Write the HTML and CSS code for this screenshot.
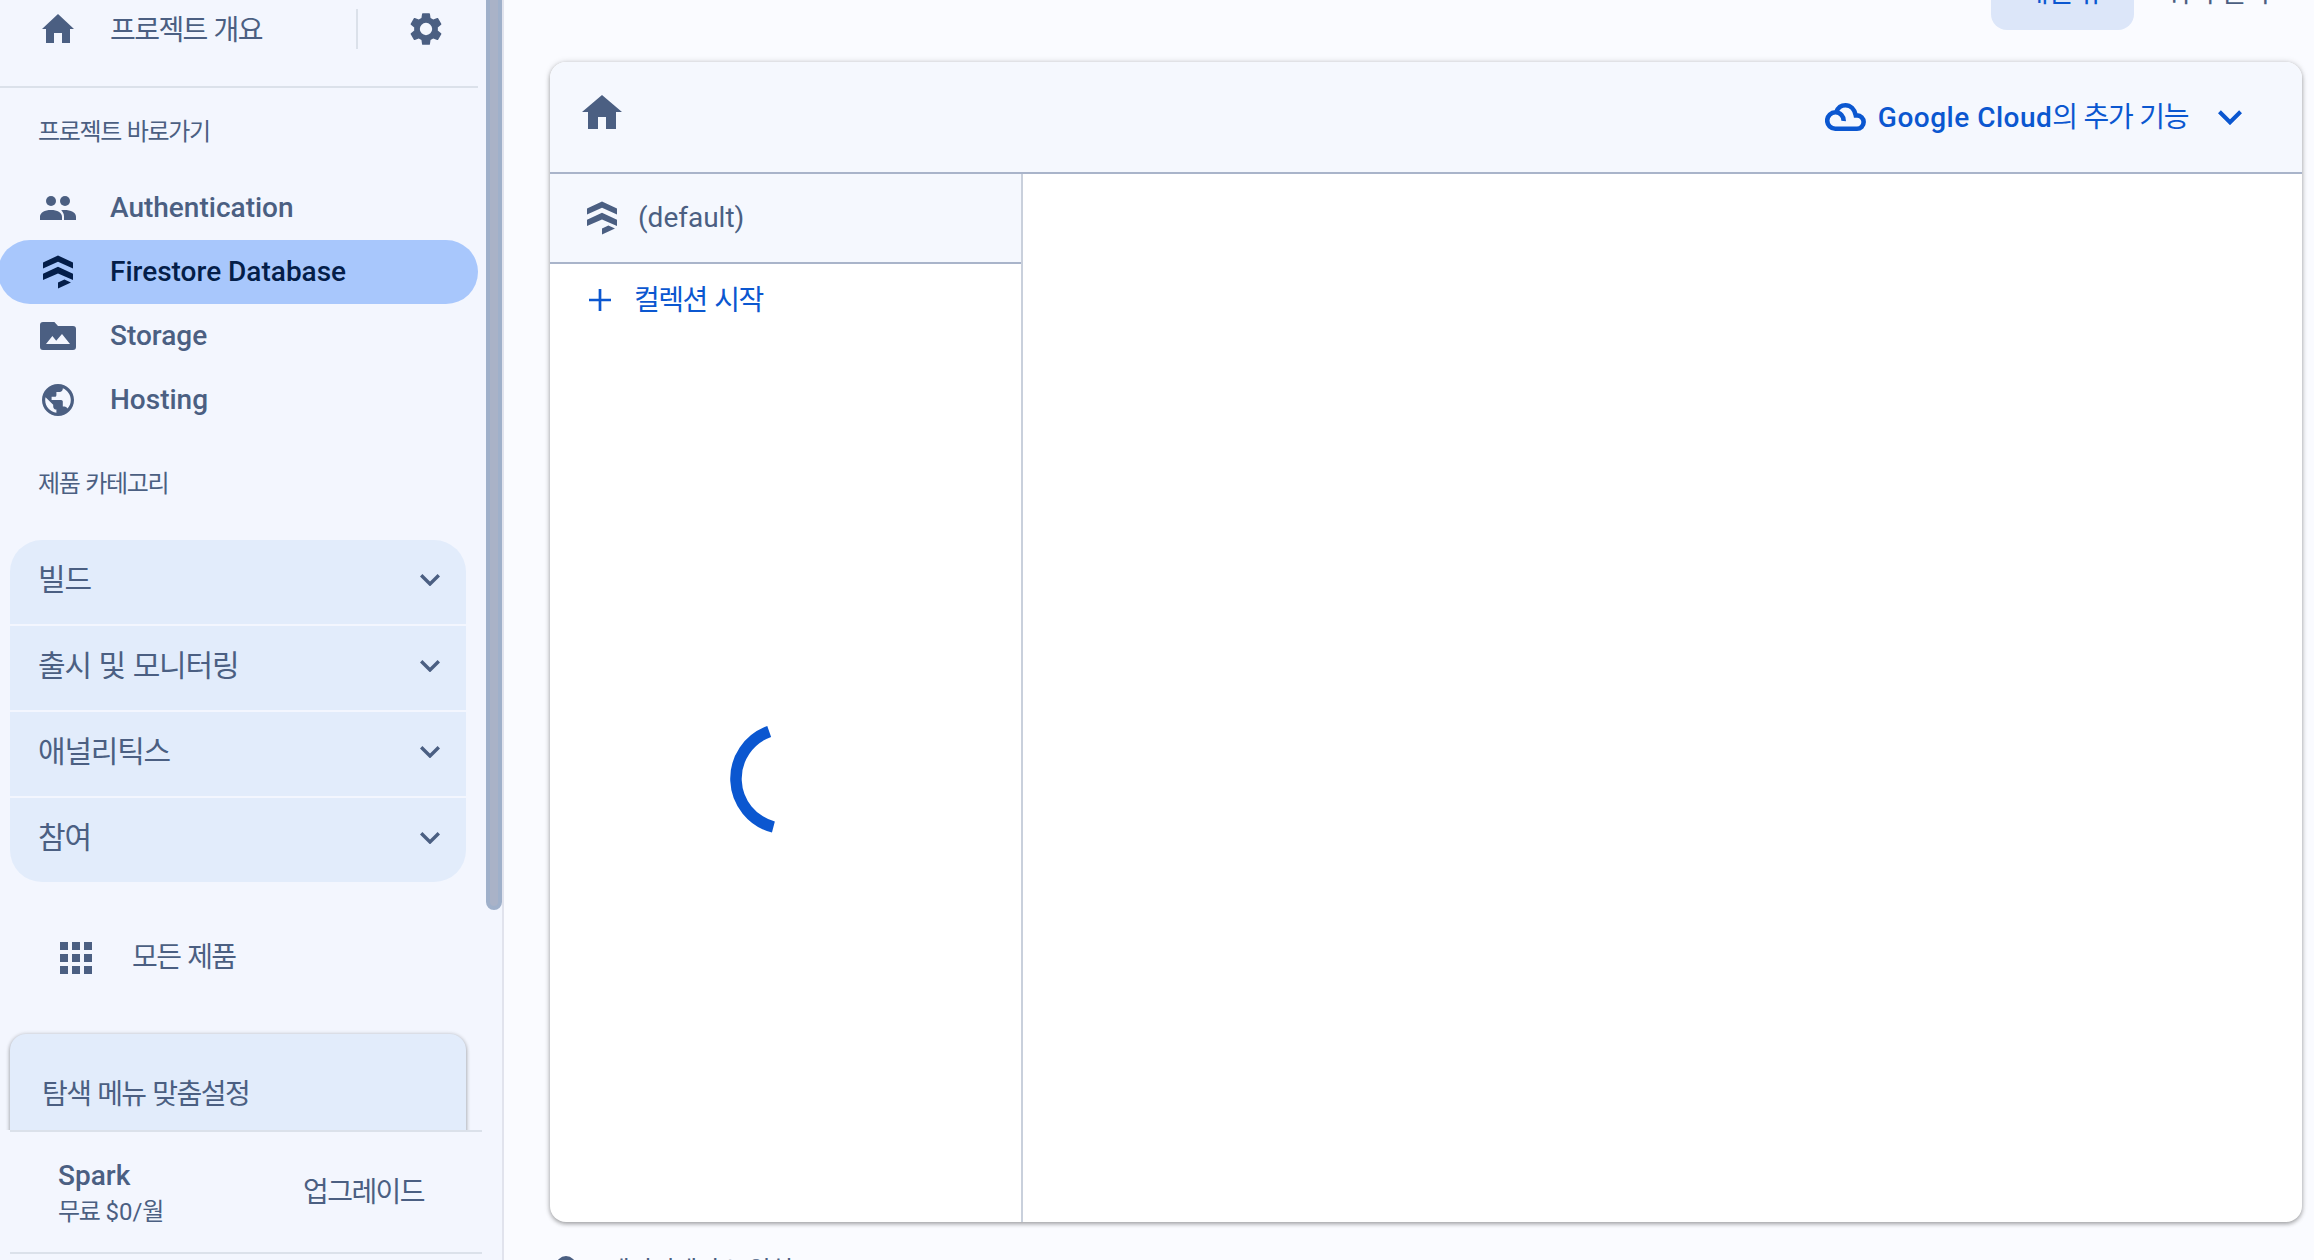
FILE: index.html
```html
<!DOCTYPE html>
<html lang="ko">
<head>
    <meta charset="UTF-8">
    <meta name="viewport" content="width=device-width, initial-scale=1.0">
    <title>Firestore Database</title>
    <link rel="stylesheet" href="styles.css">
</head>
<body>
    <!-- shared icons -->
    <svg class="defs" width="0" height="0">
        <symbol id="icon-firestore" viewBox="0 0 20 20">
            <path d="M10 1.7l7.5 3.5v3.1L10 4.9 2.5 8.3V5.2zM10 7.4l7.5 3.5V14L10 10.8 2.5 14v-3.1zM10 15.2l3.2-1.5 3.3 1.6-6.5 3z"/>
        </symbol>
        <symbol id="icon-chevron" viewBox="0 0 20 12">
            <path d="M1.2 1.2L10 10l8.8-8.8" fill="none" stroke="currentColor" stroke-width="3.4"/>
        </symbol>
    </svg>

    <div class="app">
        <nav class="sidebar">
            <div class="sidebar-scroll">
                <div class="overview">
                    <svg class="icon" viewBox="0 0 20 20"><path d="M10 2.5L2 10h2v7h4v-5h4v5h4v-7h2z"/></svg>
                    <span class="overview-label ko">프로젝트 개요</span>
                    <span class="divider"></span>
                    <svg class="gear" viewBox="0 0 24 24"><path fill-rule="evenodd" d="M19.43 12.98c.04-.32.07-.64.07-.98s-.03-.66-.07-.98l2.11-1.65c.19-.15.24-.42.12-.64l-2-3.46c-.12-.22-.39-.3-.61-.22l-2.49 1c-.52-.4-1.08-.73-1.69-.98l-.38-2.65C14.46 2.18 14.25 2 14 2h-4c-.25 0-.46.18-.49.42l-.38 2.65c-.61.25-1.17.59-1.69.98l-2.49-1c-.23-.09-.49 0-.61.22l-2 3.46c-.13.22-.07.49.12.64l2.11 1.65c-.04.32-.07.65-.07.98s.03.66.07.98l-2.11 1.65c-.19.15-.24.42-.12.64l2 3.46c.12.22.39.3.61.22l2.49-1c.52.4 1.08.73 1.69.98l.38 2.65c.03.24.24.42.49.42h4c.25 0 .46-.18.49-.42l.38-2.65c.61-.25 1.17-.59 1.69-.98l2.49 1c.23.09.49 0 .61-.22l2-3.46c.12-.22.07-.49-.12-.64zM12 8.1a3.9 3.9 0 1 0 0 7.8 3.9 3.9 0 0 0 0-7.8z"/></svg>
                </div>

                <h2 class="section-title ko">프로젝트 바로가기</h2>
                <ul class="shortcuts">
                    <li class="nav-item">
                        <svg class="icon" viewBox="0 0 20 20"><circle cx="6.5" cy="6.5" r="2.5"/><circle cx="13.5" cy="6.5" r="2.5"/><path d="M1 16v-1.6C1 12.2 3.4 11 6.5 11s5.5 1.2 5.5 3.4V16zM13 16v-1.8c0-1.3-.6-2.3-1.4-3.1C15.7 10.7 19 11.9 19 14.4V16z"/></svg>
                        <span>Authentication</span>
                    </li>
                    <li class="nav-item active">
                        <svg class="icon"><use href="#icon-firestore"/></svg>
                        <span>Firestore Database</span>
                    </li>
                    <li class="nav-item">
                        <svg class="icon" viewBox="0 0 20 20"><path fill-rule="evenodd" d="M2.5 3H8.2L10 5h7.5Q19 5 19 6.5v9q0 1.5-1.5 1.5h-15Q1 17 1 15.5v-11Q1 3 2.5 3zM4 14h12l-4-5-2.9 3.4L7.200 10z"/></svg>
                        <span>Storage</span>
                    </li>
                    <li class="nav-item">
                        <svg class="icon" viewBox="0 0 25 25"><path transform="translate(.5 .5)" d="M12 2C6.48 2 2 6.48 2 12s4.48 10 10 10 10-4.48 10-10S17.52 2 12 2zm-1 17.93c-3.95-.49-7-3.85-7-7.93 0-.62.08-1.21.21-1.79L9 15v1c0 1.1.9 2 2 2v1.93zm6.9-2.54c-.26-.81-1-1.39-1.9-1.39h-1v-3c0-.55-.45-1-1-1H8v-2h2c.55 0 1-.45 1-1V7h2c1.1 0 2-.9 2-2v-.41c2.93 1.19 5 4.06 5 7.41 0 2.08-.8 3.97-2.1 5.39z"/></svg>
                        <span>Hosting</span>
                    </li>
                </ul>

                <h2 class="section-title categories-title ko">제품 카테고리</h2>
                <ul class="categories ko">
                    <li class="category"><span>빌드</span><svg class="chevron"><use href="#icon-chevron"/></svg></li>
                    <li class="category"><span>출시 및 모니터링</span><svg class="chevron"><use href="#icon-chevron"/></svg></li>
                    <li class="category"><span>애널리틱스</span><svg class="chevron"><use href="#icon-chevron"/></svg></li>
                    <li class="category"><span>참여</span><svg class="chevron"><use href="#icon-chevron"/></svg></li>
                </ul>

                <div class="all-products">
                    <svg class="apps" viewBox="0 0 32 32"><path d="M0 0h8v8H0zM12 0h8v8h-8zM24 0h8v8h-8zM0 12h8v8H0zM12 12h8v8h-8zM24 12h8v8h-8zM0 24h8v8H0zM12 24h8v8h-8zM24 24h8v8h-8z"/></svg>
                    <span class="ko">모든 제품</span>
                </div>

                <div class="customize ko">탐색 메뉴 맞춤설정</div>
                <div class="scroll-thumb"></div>
            </div>

            <div class="plan">
                <div class="plan-info">
                    <div class="plan-name">Spark</div>
                    <div class="plan-price"><span class="ko">무료</span> $0/월</div>
                </div>
                <div class="upgrade ko">업그레이드</div>
            </div>
        </nav>

        <main class="main">
            <div class="view-tabs">
                <div class="tab selected ko">패널 뷰</div>
                <div class="tab ko">쿼리 빌더</div>
            </div>

            <section class="data-card">
                <header class="card-header">
                    <svg class="home" viewBox="0 0 24 24"><path d="M10 20v-6h4v6h5v-8.500h3L12 3 2 11.500h3V20z"/></svg>
                    <div class="cloud-menu">
                        <svg class="cloud" viewBox="0 0 41 28"><path d="M18.6 18A8.2 8.2 0 1 0 10.5 25.7H32A6.5 6.5 0 0 0 32 12.4H30.8C29.5 6.2 25.3 2.3 20.5 2.3C16 2.3 12.8 5 11.2 9.2" fill="none" stroke="currentColor" stroke-width="4.600"/></svg>
                        <span class="cloud-label">Google Cloud<span class="cloud-suffix ko">의 추가 기능</span></span>
                        <svg class="cloud-chevron"><use href="#icon-chevron"/></svg>
                    </div>
                </header>
                <div class="panels">
                    <div class="panel">
                        <div class="panel-header">
                            <svg class="icon"><use href="#icon-firestore"/></svg>
                            <span>(default)</span>
                        </div>
                        <div class="add-collection">
                            <svg class="plus" viewBox="0 0 22 22"><path d="M11 0v22M0 11h22" stroke="currentColor" stroke-width="2.700"/></svg>
                            <span class="ko">컬렉션 시작</span>
                        </div>
                        <div class="loading">
                            <svg class="spinner" viewBox="-56 -56 112 112"><path d="M-15.8 -47.5A50 50 0 0 0 -11.6 48" fill="none" stroke="currentColor" stroke-width="11.500"/></svg>
                        </div>
                    </div>
                    <div class="panel-empty"></div>
                </div>
            </section>

            <div class="location">
                <svg class="pin" viewBox="0 0 20 28"><path d="M10 0a10 10 0 0 0-10 10c0 7 10 18 10 18s10-11 10-18A10 10 0 0 0 10 0zm0 6.500a3.500 3.500 0 1 1 0 7 3.500 3.500 0 0 1 0-7z"/></svg>
                <span><span class="ko">데이터베이스 위치</span>: asia-northeast3</span>
            </div>
        </main>
    </div>
</body>
</html>
```

FILE: styles.css
```css
* {
    box-sizing: border-box;
}
body {
    margin: 0;
    font-family: Roboto, "Noto Sans CJK KR", sans-serif;
    font-size: 28px;
    color: #4b5f82;
    background-color: #fafbff;
    overflow: hidden;
}
ul {
    list-style: none;
    margin: 0;
    padding: 0;
}
svg {
    display: block;
    flex: none;
    fill: currentColor;
}
.defs {
    position: absolute;
}
.ko {
    letter-spacing: -0.056em;
    word-spacing: 0.05em;
}
.icon {
    width: 40px;
    height: 40px;
}
.app {
    display: flex;
    height: 1260px;
}

/* sidebar */
.sidebar {
    display: flex;
    flex-direction: column;
    flex: none;
    width: 504px;
    border-right: 2px solid #e1e3ed;
    background-color: #f3f6fe;
}
.sidebar-scroll {
    position: relative;
    height: 1130px;
    overflow: hidden;
}
.overview {
    display: flex;
    align-items: center;
    width: 478px;
    height: 88px;
    padding: 0 33px 28px 38px;
    border-bottom: 2px solid #dbe1ea;
}
.overview-label {
    flex: 1;
    margin-left: 32px;
    padding-bottom: 3px;
}
.divider {
    width: 2px;
    height: 40px;
    margin-right: 49px;
    background-color: #dbe1ea;
}
.gear {
    width: 38px;
    height: 38px;
}
.section-title {
    height: 88px;
    margin: 0;
    padding-left: 38px;
    font-size: 24px;
    font-weight: 400;
    line-height: 88px;
}
.nav-item {
    display: flex;
    align-items: center;
    gap: 32px;
    width: 480px;
    height: 64px;
    margin-left: -2px;
    padding-left: 40px;
    border-radius: 32px;
    font-weight: 500;
}
.nav-item span {
    padding-bottom: 1px;
}
.nav-item.active {
    color: #041e49;
    background-color: #a8c7fc;
}
.categories-title {
    height: 108px;
    line-height: 104px;
}
.categories {
    display: flex;
    flex-direction: column;
    gap: 2px;
    width: 456px;
    margin-left: 10px;
    border-radius: 32px;
    overflow: hidden;
    font-size: 30px;
    letter-spacing: -0.04em;
}
.category {
    display: flex;
    align-items: center;
    justify-content: space-between;
    height: 84px;
    padding: 0 26px 4px 28px;
    background-color: #e2ecfb;
}
.category span {
    padding-bottom: 6px;
}
.chevron {
    width: 20px;
    height: 12px;
}
.all-products {
    display: flex;
    align-items: center;
    gap: 40px;
    height: 152px;
    padding-left: 60px;
}
.all-products span {
    padding-bottom: 6px;
}
.apps {
    width: 32px;
    height: 32px;
}
.customize {
    width: 456px;
    height: 130px;
    margin-left: 10px;
    padding-left: 32px;
    border-radius: 16px;
    line-height: 121px;
    background-color: #e2ecfb;
    box-shadow: 0 2px 4px rgba(0, 0, 0, 0.3), 0 0 4px rgba(0, 0, 0, 0.15);
}
.scroll-thumb {
    position: absolute;
    top: -10px;
    right: 0;
    width: 16px;
    height: 920px;
    border: 4px solid #9fb0ca;
    border-radius: 8px;
    background-color: #a9b2c7;
}
.plan {
    display: flex;
    align-items: center;
    justify-content: space-between;
    width: 472px;
    height: 124px;
    margin-left: 10px;
    padding: 0 58px 0 48px;
    border-top: 2px solid #dbe1ea;
    border-bottom: 2px solid #dbe1ea;
}
.plan-info {
    padding-top: 2px;
}
.plan-name {
    font-weight: 500;
    line-height: 38px;
}
.plan-price {
    font-size: 24px;
    line-height: 34px;
}
.upgrade {
    padding-bottom: 5px;
}

/* main area */
.main {
    flex: 1;
    padding: 0 12px 0 46px;
}
.view-tabs {
    display: flex;
    justify-content: flex-end;
    height: 62px;
}
.tab {
    width: 168px;
    height: 80px;
    margin-top: -50px;
    padding-left: 31px;
    border-radius: 16px;
    line-height: 85px;
    white-space: nowrap;
}
.tab.selected {
    width: 143px;
    padding-left: 32px;
    color: #0b57d0;
    background-color: #dce6f9;
}
.data-card {
    display: flex;
    flex-direction: column;
    height: 1160px;
    border-radius: 16px;
    overflow: hidden;
    background-color: #fff;
    box-shadow: 0 2px 4px rgba(0, 0, 0, 0.3), 0 0 6px rgba(0, 0, 0, 0.15);
}
.card-header {
    display: flex;
    align-items: center;
    justify-content: space-between;
    height: 112px;
    padding: 0 60px 0 28px;
    border-bottom: 2px solid #a9b4ca;
    background-color: #f5f8fe;
}
.home {
    width: 48px;
    height: 48px;
    margin-bottom: 8px;
}
.cloud-menu {
    display: flex;
    align-items: center;
    font-weight: 500;
    color: #0b57d0;
}
.cloud {
    width: 41px;
    height: 28px;
    margin-right: 12px;
}
.cloud-label {
    padding-bottom: 4px;
    letter-spacing: 0.5px;
}
.cloud-suffix {
    font-weight: 400;
    letter-spacing: -0.05em;
}
.cloud-chevron {
    width: 24px;
    height: 15px;
    margin-left: 30px;
}
.panels {
    display: flex;
    flex: 1;
}
.panel {
    display: flex;
    flex-direction: column;
    width: 473px;
    border-right: 2px solid #c9d0dc;
}
.panel-header {
    display: flex;
    align-items: center;
    gap: 16px;
    height: 90px;
    padding-left: 32px;
    border-bottom: 2px solid #a9b4ca;
    background-color: #f5f8fe;
}
.panel-header span {
    padding-bottom: 2px;
}
.add-collection {
    display: flex;
    align-items: center;
    gap: 23px;
    height: 72px;
    padding-left: 39px;
    color: #0b57d0;
}
.add-collection .ko {
    padding-bottom: 4px;
    word-spacing: 0.08em;
}
.plus {
    width: 22px;
    height: 22px;
}
.loading {
    display: flex;
    flex: 1;
    align-items: center;
    justify-content: center;
    padding-right: 2px;
    color: #0b57d0;
}
.spinner {
    width: 112px;
    height: 112px;
}
.panel-empty {
    flex: 1;
}
.location {
    display: flex;
    gap: 30px;
    margin-top: 34px;
    padding-left: 6px;
    font-size: 26px;
    line-height: 30px;
}
.pin {
    width: 20px;
    height: 28px;
}
```
